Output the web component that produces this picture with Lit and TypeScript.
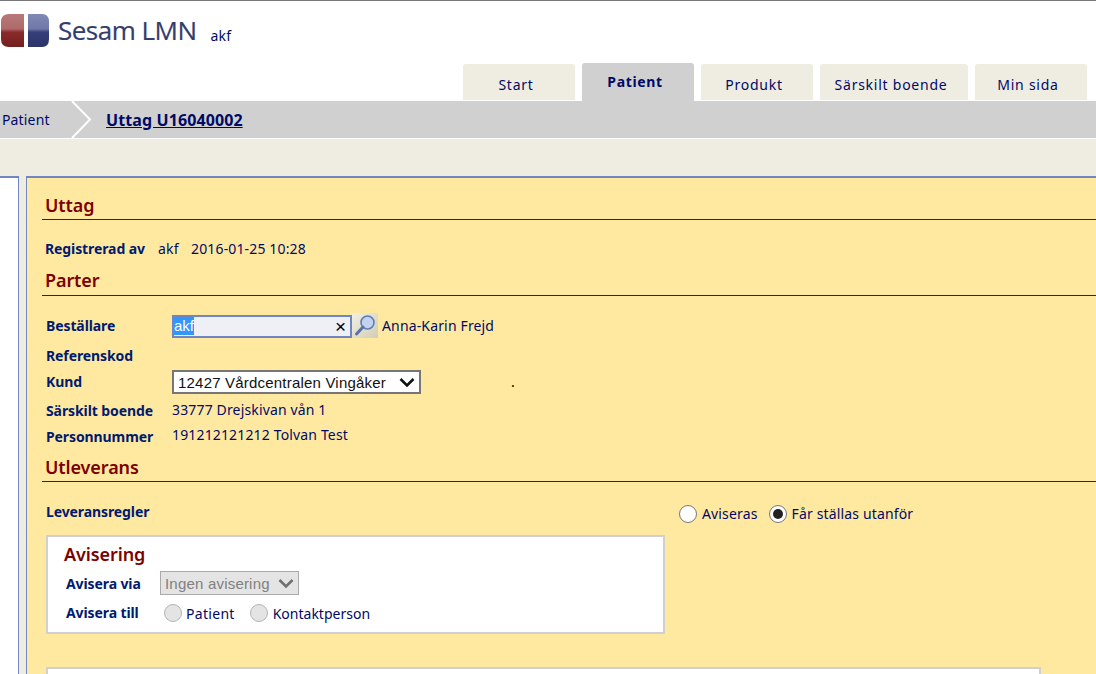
import { LitElement, html, css } from "lit";
import { customElement } from "lit/decorators.js";

@customElement("app-root")
export class AppRoot extends LitElement {
  static styles = css`
    :host { display: block; width: 1096px; height: 674px; overflow: hidden; background: #fff; font-family: "Noto Sans", sans-serif; font-size: 14px; color: #000a66; }
    * { box-sizing: border-box; }
    .topline { height: 1px; background: #777; }
    .header { height: 63px; position: relative; display: flex; }
    .logo { margin: 12px 0 0 1px; width: 49px; height: 35px; flex: none; }
    .brand { margin: 9px 0 0 8px; font-family: "Open Sans", sans-serif; font-size: 26px; line-height: 40px; color: #343c6c; letter-spacing: -0.5px; height: 40px; -webkit-text-stroke: 0.2px #343c6c; }
    .user { margin: 23px 0 0 14px; line-height: 24px; height: 24px; letter-spacing: 0.2px; }
    .tabs { height: 37px; display: flex; align-items: flex-end; padding-left: 463px; gap: 7px; }
    .tab { height: 36px; margin-bottom: 1px; background: #efede1; border-radius: 3px 3px 0 0; display: flex; align-items: center; justify-content: center; padding: 4px 6px 0 0; letter-spacing: 0.75px; white-space: nowrap; }
    .tab.active { height: 38px; background: #d0d0d0; font-weight: 700; padding: 0 6px 1px 0; margin-bottom: 0; letter-spacing: 0.65px; }
    .crumbs { height: 37px; background: #d0d0d0; display: flex; align-items: center; position: relative; }
    .crumbs .p { margin-left: 2px; width: 104px; letter-spacing: 0.15px; }
    .crumbs svg { position: absolute; left: 70px; top: 0; }
    .crumbs a { font-weight: 700; font-size: 16px; text-decoration: underline; letter-spacing: 0.1px; color: #000a66; }
    .gap { height: 1px; background: #fff; }
    .band { height: 37px; background: #efede1; }
    .body { height: 500px; display: flex; background: #efede1; align-items: stretch; }
    .left { width: 19px; background: #fff; border: solid #7187c2; border-width: 2px 1px 0 0; flex: none; }
    .main { margin-left: 7px; flex: 1; background: #ffe9a0; border: solid #7187c2; border-width: 2px 0 0 1px; padding-top: 15px; letter-spacing: 0.15px; }
    .h { margin-left: 15px; height: 27px; border-bottom: 1px solid #800404; padding-left: 3px; font-size: 18px; font-weight: 600; line-height: 25px; color: #7b0000; letter-spacing: -0.1px; }
    .reg { margin: 16px 0 0 18px; height: 24px; display: flex; align-items: center; }
    .b { font-weight: 700; color: #001a70; letter-spacing: -0.1px; }
    .reg .b { width: 113px; }
    .reg .u { width: 33px; }
    .h2 { margin-top: 9px; line-height: 23px; }
    .rows { margin: 16px 0 0 19px; }
    .row { display: flex; align-items: center; }
    .row .b { width: 126px; flex: none; }
    .r1 { height: 26px; }
    .r2 { height: 26px; margin-top: 4px; }
    .r3 { height: 24px; margin-top: 1px; }
    .r4 { height: 24px; margin-top: 5px; }
    .r5 { height: 24px; margin-top: 2px; }
    .up1 { margin-bottom: 2px; }
    .up2 { margin-bottom: 4px; }
    .input { width: 180px; height: 23px; margin-top: 2px; background: #eef0f6; border: 2px solid #6f86c2; display: flex; align-items: center; font: 15px "Liberation Sans", sans-serif; color: #000; position: relative; letter-spacing: 0; }
    .sel { background: #3297fd; color: #fff; line-height: 18px; height: 18px; }
    .x { position: absolute; right: 4px; top: 0; line-height: 19px; font-size: 19px; }
    .search { width: 26px; height: 25px; flex: none; display: block; }
    .name { margin-left: 4px; }
    .select { width: 249px; height: 24px; margin-top: 2px; border: 2px solid #767676; background: #fff; font: 15px "Liberation Sans", sans-serif; color: #111; display: flex; align-items: center; padding: 0 4px 0 4px; justify-content: space-between; letter-spacing: 0.2px; }
    .dot { margin-left: 90px; color: #000; }
    .uth { margin-top: 7px; }
    .lev { display: flex; margin: 0 0 0 19px; height: 53px; }
    .lev .b { width: 633px; padding-top: 20px; flex: none; }
    .radios { display: flex; align-items: center; padding-top: 10px; height: 53px; }
    .radio { width: 18px; height: 18px; border-radius: 50%; border: 1.5px solid #767676; background: #fff; flex: none; display: flex; align-items: center; justify-content: center; }
    .radio i { width: 10px; height: 10px; border-radius: 50%; background: #222; display: block; }
    .radio.off { background: #e4e4e4; border-color: #b4b4b4; }
    .rl { margin-left: 5px; margin-right: 11px; }
    .box { margin-left: 19px; width: 619px; height: 99px; background: #fff; border: 2px solid #d0d0d0; padding: 4px 0 0 16px; }
    .box .t { font-size: 18px; font-weight: 600; color: #7b0000; line-height: 26px; height: 26px; letter-spacing: -0.1px; }
    .ar { display: flex; align-items: center; margin-left: 2px; }
    .ar .b { width: 94px; flex: none; }
    .ar1 { height: 24px; margin-top: 4px; }
    .ar2 { height: 24px; margin-top: 6px; }
    .ar2 .b { margin-bottom: 1px; }
    .dis { width: 139px; height: 24px; background: #e4e4e4; border: 1.5px solid #aaa; display: flex; align-items: center; justify-content: space-between; font: 15px "Liberation Sans", sans-serif; color: #808080; padding: 0 4px 0 4px; letter-spacing: 0.2px; }
    .ar2 .radio { margin-left: 4px; }
    .ar2 .rl { margin-right: 15px; margin-left: 4px; letter-spacing: 0.3px; }
    .ar2 .rl + .radio { margin-left: 0; }
    .ar2 .rl:last-child { margin-left: 5px; letter-spacing: 0; }
    .box2 { margin: 33px 0 0 19px; width: 995px; height: 60px; background: #fff; border: 2px solid #d0d0d0; }
  `;

  chevron(color: string) {
    return html`<svg width="16" height="11" viewBox="0 0 16 11"><path d="M1.5 2 L8 8.5 L14.5 2" fill="none" stroke=${color} stroke-width="2.6"/></svg>`;
  }

  render() {
    return html`
      <div class="topline"></div>
      <div class="header">
        <svg class="logo" viewBox="0 0 49 35">
          <defs>
            <linearGradient id="r" x1="0" y1="0" x2="0" y2="1"><stop offset="0" stop-color="#b87878"/><stop offset=".45" stop-color="#b06a6a"/><stop offset=".55" stop-color="#8a2a2a"/><stop offset="1" stop-color="#742020"/></linearGradient>
            <linearGradient id="b" x1="0" y1="0" x2="0" y2="1"><stop offset="0" stop-color="#8088b4"/><stop offset=".45" stop-color="#7078a8"/><stop offset=".55" stop-color="#353f78"/><stop offset="1" stop-color="#2c3468"/></linearGradient>
          </defs>
          <path d="M8 1 H23 V34 H8 Q0 34 0 26 V9 Q0 1 8 1 Z" fill="url(#r)"/>
          <path d="M27 1 H41 Q48 1 48 9 V26 Q48 34 41 34 H27 Z" fill="url(#b)"/>
        </svg>
        <div class="brand">Sesam LMN</div>
        <div class="user">akf</div>
      </div>
      <div class="tabs">
        <div class="tab" style="width:112px">Start</div>
        <div class="tab active" style="width:112px">Patient</div>
        <div class="tab" style="width:112px">Produkt</div>
        <div class="tab" style="width:148px">Särskilt boende</div>
        <div class="tab" style="width:112px">Min sida</div>
      </div>
      <div class="crumbs">
        <div class="p">Patient</div>
        <svg width="24" height="37" viewBox="0 0 24 37"><path d="M2 0 L20 18.5 L2 37" fill="none" stroke="#fff" stroke-width="2"/></svg>
        <a>Uttag U16040002</a>
      </div>
      <div class="gap"></div>
      <div class="band"></div>
      <div class="body">
        <div class="left"></div>
        <div class="main">
          <div class="h">Uttag</div>
          <div class="reg"><span class="b">Registrerad av</span><span class="u">akf</span><span>2016-01-25 10:28</span></div>
          <div class="h h2">Parter</div>
          <div class="rows">
            <div class="row r1">
              <span class="b">Beställare</span>
              <div class="input"><span class="sel">akf</span><span class="x">×</span></div>
              <svg class="search" viewBox="0 0 26 25">
                <defs><linearGradient id="s" x1="0" y1="0" x2="1" y2="1"><stop offset="0" stop-color="#f2efe2"/><stop offset="1" stop-color="#d2cdb6"/></linearGradient></defs>
                <rect width="26" height="25" fill="url(#s)"/>
                <circle cx="15.5" cy="9.5" r="6.5" fill="#c3d2ee" stroke="#5f7fb0" stroke-width="1.6"/>
                <path d="M11 14 L4.5 21" stroke="#5873a8" stroke-width="3" stroke-linecap="round"/>
              </svg>
              <span class="name">Anna-Karin Frejd</span>
            </div>
            <div class="row r2"><span class="b">Referenskod</span></div>
            <div class="row r3">
              <span class="b">Kund</span>
              <div class="select"><span>12427 Vårdcentralen Vingåker</span>${this.chevron("#111")}</div>
              <span class="dot">.</span>
            </div>
            <div class="row r4"><span class="b">Särskilt boende</span><span class="up1">33777 Drejskivan vån 1</span></div>
            <div class="row r5"><span class="b">Personnummer</span><span class="up2">191212121212 Tolvan Test</span></div>
          </div>
          <div class="h uth">Utleverans</div>
          <div class="lev">
            <span class="b">Leveransregler</span>
            <div class="radios">
              <span class="radio"></span><span class="rl">Aviseras</span>
              <span class="radio"><i></i></span><span class="rl">Får ställas utanför</span>
            </div>
          </div>
          <div class="box">
            <div class="t">Avisering</div>
            <div class="ar ar1"><span class="b">Avisera via</span>
              <div class="dis"><span>Ingen avisering</span>${this.chevron("#707070")}</div>
            </div>
            <div class="ar ar2"><span class="b">Avisera till</span>
              <span class="radio off"></span><span class="rl">Patient</span>
              <span class="radio off"></span><span class="rl">Kontaktperson</span>
            </div>
          </div>
          <div class="box2"></div>
        </div>
      </div>
    `;
  }
}
